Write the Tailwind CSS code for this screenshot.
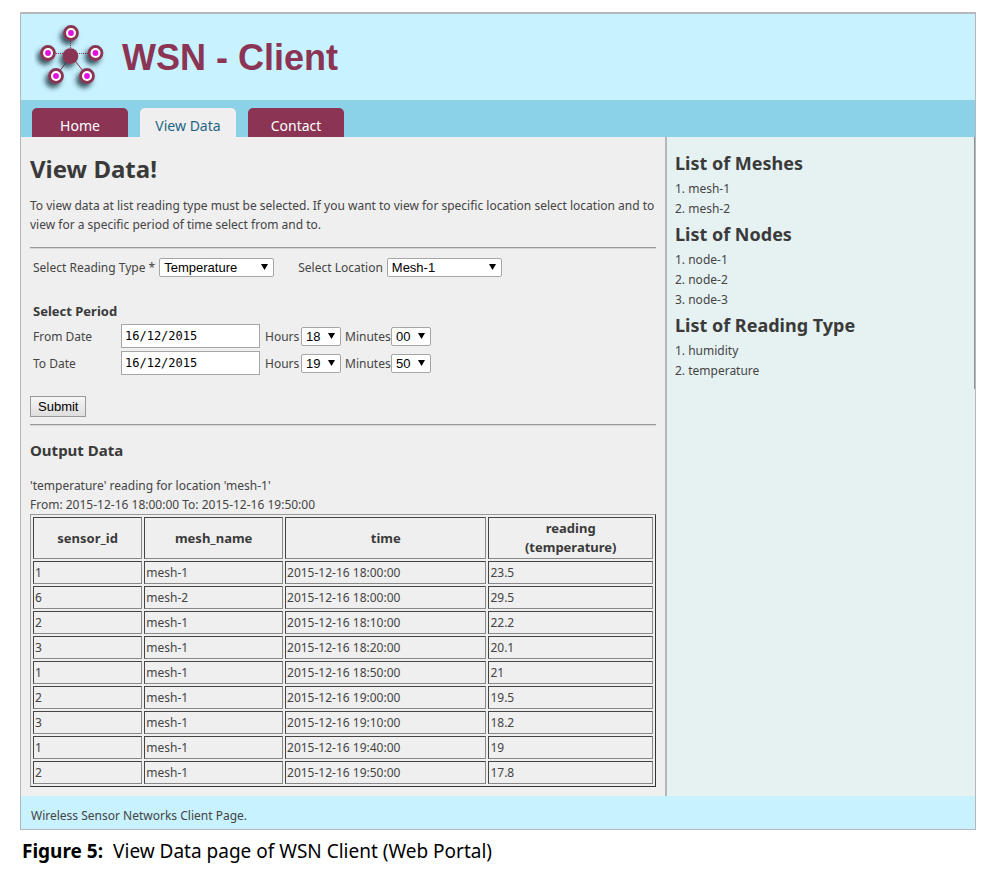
<!DOCTYPE html>
<html lang="en">
<head>
<meta charset="utf-8">
<meta name="viewport" content="width=device-width, initial-scale=1">
<title>WSN - Client</title>
<script src="https://cdn.jsdelivr.net/npm/@tailwindcss/browser@4"></script>
</head>
<body class="bg-white pt-3 pr-[21px] pl-5 font-['Noto_Sans',sans-serif] text-[12px] leading-[19px] text-[#444]">
<div class="border border-t-2 border-[#b5b8ba] bg-[#efefef]">
  <header class="flex h-[86px] items-center gap-[14px] bg-[#c8f2ff] pl-[13px]">
    <svg class="h-[76px] w-[74px] shrink-0" viewBox="0 0 74 76" aria-hidden="true">
      <defs>
        <filter id="shadow" x="-60%" y="-60%" width="220%" height="220%">
          <feDropShadow dx="-3" dy="4" stdDeviation="2.4" flood-color="#1c3a44" flood-opacity="0.85"/>
        </filter>
        <g id="node">
          <circle r="7.9" fill="#8b3454"/>
          <circle r="5" fill="#fff"/>
          <circle r="2.9" fill="#e410e4"/>
        </g>
      </defs>
      <g stroke="#8b3454" stroke-width="1">
        <path d="M36.500 37V14M37 34.500H14M37 34.500h25" stroke-dasharray="1 1"/>
        <path d="M36 38 22 57M38 38l15 19"/>
      </g>
      <circle cx="36.500" cy="37" r="7.800" fill="#8b3454" filter="url(#shadow)"/>
      <g filter="url(#shadow)">
        <use href="#node" x="37" y="14"/>
        <use href="#node" x="14" y="34"/>
        <use href="#node" x="61.500" y="34"/>
        <use href="#node" x="22" y="57"/>
        <use href="#node" x="53" y="57"/>
      </g>
    </svg>
    <div class="pt-[2px] font-['Liberation_Sans',sans-serif] text-[36px] leading-[40px] font-bold text-[#8b3454]">WSN - Client</div>
  </header>

  <nav class="flex h-[37px] items-end gap-3 bg-[#8bd2e8] pl-[11px] text-[14px] leading-[20px] text-white">
    <a href="#" class="h-[29px] w-24 rounded-t-[5px] bg-[#8b3454] pt-2 text-center">Home</a>
    <a href="#" class="h-[29px] w-24 rounded-t-[5px] bg-[#efefef] pt-2 text-center text-[#1d6585]" aria-current="page">View Data</a>
    <a href="#" class="h-[29px] w-24 rounded-t-[5px] bg-[#8b3454] pt-2 text-center">Contact</a>
  </nav>

  <div class="flex">
    <main class="min-w-0 flex-1 px-[9px] pt-4 pb-[9px]">
      <h1 class="text-[24px] leading-[32px] font-bold text-[#3a3a3a]">View Data!</h1>
      <p class="mt-[11px]">To view data at list reading type must be selected. If you want to view for specific location select location and to view for a specific period of time select from and to.</p>
      <hr class="mt-[13px] border-t border-b border-t-[#999] border-b-[#d6d6d6]">

      <form class="mt-[9px]">
        <div class="flex items-center gap-6 pl-[3px]">
          <div class="flex items-center gap-1">
            <label for="type">Select Reading Type *</label>
            <div class="relative">
              <select id="type" class="block h-[19px] w-[115px] appearance-none rounded-[2px] border border-[#a6a6a6] bg-white pl-1 font-['Liberation_Sans',sans-serif] text-[13px] leading-[17px] text-black"><option>Temperature</option><option>Humidity</option></select>
              <svg class="pointer-events-none absolute top-[6px] right-[6px] h-[6px] w-[7px]" viewBox="0 0 7 6"><path d="M0 0h7L3.500 6z"/></svg>
            </div>
          </div>
          <div class="flex items-center gap-1">
            <label for="loc">Select Location</label>
            <div class="relative">
              <select id="loc" class="block h-[19px] w-[115px] appearance-none rounded-[2px] border border-[#a6a6a6] bg-white pl-1 font-['Liberation_Sans',sans-serif] text-[13px] leading-[17px] text-black"><option>Mesh-1</option><option>Mesh-2</option></select>
              <svg class="pointer-events-none absolute top-[6px] right-[6px] h-[6px] w-[7px]" viewBox="0 0 7 6"><path d="M0 0h7L3.500 6z"/></svg>
            </div>
          </div>
        </div>

        <fieldset class="mt-6 pl-[3px]">
          <legend class="text-[13px] leading-[20px] font-bold text-[#3a3a3a]">Select Period</legend>
          <div class="mt-[3px] flex items-center">
            <label for="from" class="w-[88px]">From Date</label>
            <input id="from" type="text" value="16/12/2015" class="h-6 w-[139px] border border-[#a6a6a6] bg-white pl-[3px] font-['DejaVu_Sans_Mono',monospace] text-[12px] text-black">
            <label for="fh" class="ml-[5px] w-9">Hours</label>
            <div class="relative">
              <select id="fh" class="block h-[19px] w-10 appearance-none rounded-[2px] border border-[#a6a6a6] bg-white pl-1 font-['Liberation_Sans',sans-serif] text-[13px] leading-[17px] text-black"><option>18</option><option>19</option></select>
              <svg class="pointer-events-none absolute top-[6px] right-[6px] h-[6px] w-[7px]" viewBox="0 0 7 6"><path d="M0 0h7L3.500 6z"/></svg>
            </div>
            <label for="fm" class="ml-1 w-[46px]">Minutes</label>
            <div class="relative">
              <select id="fm" class="block h-[19px] w-10 appearance-none rounded-[2px] border border-[#a6a6a6] bg-white pl-1 font-['Liberation_Sans',sans-serif] text-[13px] leading-[17px] text-black"><option>00</option><option>50</option></select>
              <svg class="pointer-events-none absolute top-[6px] right-[6px] h-[6px] w-[7px]" viewBox="0 0 7 6"><path d="M0 0h7L3.500 6z"/></svg>
            </div>
          </div>
          <div class="mt-[3px] flex items-center">
            <label for="to" class="w-[88px]">To Date</label>
            <input id="to" type="text" value="16/12/2015" class="h-6 w-[139px] border border-[#a6a6a6] bg-white pl-[3px] font-['DejaVu_Sans_Mono',monospace] text-[12px] text-black">
            <label for="th" class="ml-[5px] w-9">Hours</label>
            <div class="relative">
              <select id="th" class="block h-[19px] w-10 appearance-none rounded-[2px] border border-[#a6a6a6] bg-white pl-1 font-['Liberation_Sans',sans-serif] text-[13px] leading-[17px] text-black"><option>19</option><option>18</option></select>
              <svg class="pointer-events-none absolute top-[6px] right-[6px] h-[6px] w-[7px]" viewBox="0 0 7 6"><path d="M0 0h7L3.500 6z"/></svg>
            </div>
            <label for="tm" class="ml-1 w-[46px]">Minutes</label>
            <div class="relative">
              <select id="tm" class="block h-[19px] w-10 appearance-none rounded-[2px] border border-[#a6a6a6] bg-white pl-1 font-['Liberation_Sans',sans-serif] text-[13px] leading-[17px] text-black"><option>50</option><option>00</option></select>
              <svg class="pointer-events-none absolute top-[6px] right-[6px] h-[6px] w-[7px]" viewBox="0 0 7 6"><path d="M0 0h7L3.500 6z"/></svg>
            </div>
          </div>
        </fieldset>
        <button type="submit" class="mt-[21px] block h-[21px] border border-[#999] bg-linear-to-b from-[#f6f6f6] to-[#dedede] px-[7px] font-['Liberation_Sans',sans-serif] text-[13px] leading-[17px] text-black">Submit</button>
      </form>
      <hr class="mt-[7px] border-t border-b border-t-[#999] border-b-[#d6d6d6]">

      <h2 class="mt-[13px] text-[15px] leading-[22px] font-bold text-[#3a3a3a]">Output Data</h2>
      <p class="mt-[15px]">'temperature' reading for location 'mesh-1'<br>From: 2015-12-16 18:00:00 To: 2015-12-16 19:50:00</p>
      <table class="w-full table-fixed border-separate border-spacing-[2px] border border-t-[#999] border-r-[#333] border-b-[#333] border-l-[#999] [&_td]:border [&_td]:border-t-[#444] [&_td]:border-r-[#888] [&_td]:border-b-[#888] [&_td]:border-l-[#444] [&_td]:p-px [&_th]:border [&_th]:border-t-[#444] [&_th]:border-r-[#888] [&_th]:border-b-[#888] [&_th]:border-l-[#444] [&_th]:px-5 [&_th]:py-px [&_th]:text-[13px] [&_th]:text-[#3a3a3a]">
        <colgroup><col class="w-[17.8%]"><col class="w-[22.6%]"><col class="w-[32.8%]"><col></colgroup>
        <thead><tr><th>sensor_id</th><th>mesh_name</th><th>time</th><th>reading (temperature)</th></tr></thead>
        <tbody>
          <tr><td>1</td><td>mesh-1</td><td>2015-12-16 18:00:00</td><td>23.5</td></tr>
          <tr><td>6</td><td>mesh-2</td><td>2015-12-16 18:00:00</td><td>29.5</td></tr>
          <tr><td>2</td><td>mesh-1</td><td>2015-12-16 18:10:00</td><td>22.2</td></tr>
          <tr><td>3</td><td>mesh-1</td><td>2015-12-16 18:20:00</td><td>20.1</td></tr>
          <tr><td>1</td><td>mesh-1</td><td>2015-12-16 18:50:00</td><td>21</td></tr>
          <tr><td>2</td><td>mesh-1</td><td>2015-12-16 19:00:00</td><td>19.5</td></tr>
          <tr><td>3</td><td>mesh-1</td><td>2015-12-16 19:10:00</td><td>18.2</td></tr>
          <tr><td>1</td><td>mesh-1</td><td>2015-12-16 19:40:00</td><td>19</td></tr>
          <tr><td>2</td><td>mesh-1</td><td>2015-12-16 19:50:00</td><td>17.8</td></tr>
        </tbody>
      </table>
    </main>

    <aside class="relative w-[310px] shrink-0 border-l-2 border-[#b5b8ba] bg-[#e6f2f2] pt-[14px] pl-2">
      <div class="absolute top-0 right-0 h-[252px] w-px bg-[#8c9494]"></div>
      <h2 class="text-[18px] leading-[24px] font-bold text-[#3a3a3a]">List of Meshes</h2>
      <ol class="mt-1 mb-[3px] list-inside list-decimal leading-[20px]">
        <li>mesh-1</li><li>mesh-2</li>
      </ol>
      <h2 class="text-[18px] leading-[24px] font-bold text-[#3a3a3a]">List of Nodes</h2>
      <ol class="mt-1 mb-[3px] list-inside list-decimal leading-[20px]">
        <li>node-1</li><li>node-2</li><li>node-3</li>
      </ol>
      <h2 class="text-[18px] leading-[24px] font-bold text-[#3a3a3a]">List of Reading Type</h2>
      <ol class="mt-1 mb-[3px] list-inside list-decimal leading-[20px]">
        <li>humidity</li><li>temperature</li>
      </ol>
    </aside>
  </div>

  <footer class="bg-[#c8f2ff] px-[10px] pt-[10px] pb-1">Wireless Sensor Networks Client Page.</footer>
</div>
<p class="mt-2 pl-[2px] text-[19px] leading-[26px] text-black"><strong class="mr-[10px] font-bold">Figure 5:</strong>View Data page of WSN Client (Web Portal)</p>
</body>
</html>
